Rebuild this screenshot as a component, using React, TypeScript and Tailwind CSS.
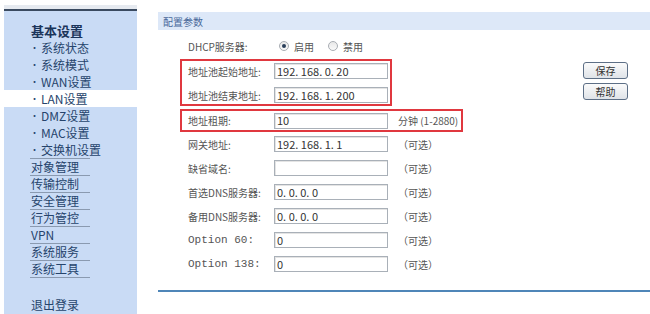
const basicItems = ["系统状态", "系统模式", "WAN设置", "LAN设置", "DMZ设置", "MAC设置", "交换机设置"];
const groupItems = ["对象管理", "传输控制", "安全管理", "行为管控", "VPN", "系统服务", "系统工具"];

const cjk = { fontFamily: '"Noto Sans CJK SC", "DejaVu Sans", sans-serif' };

function Sidebar() {
  return (
    <div className="ml-[4px] mt-[5px] w-[133px] flex flex-col shrink-0">
      <div className="h-[6px] bg-[#e6eaf0] border-b-2 border-[#3a4a60]" />
      <div className="flex-1 bg-[#c9dbf5] pt-[11px] text-[#26446c]">
        <div className="h-[17px] flex items-center pl-[27px] text-[13px] font-bold text-[#1b355a]">
          基本设置
        </div>
        {basicItems.map((item) => (
          <div
            key={item}
            className={
              "h-[17px] flex items-center pl-[26px] text-[12px] " +
              (item === "LAN设置" ? "bg-white" : "")
            }
          >
            <span className="text-[9px] mr-[2px]">•</span>
            {item}
          </div>
        ))}
        <div className="ml-[26px] w-[60px] border-t border-[#8a9ab0]">
          {groupItems.map((item) => (
            <div
              key={item}
              className="h-[17px] flex items-center pl-[1px] text-[12px] border-b border-[#8a9ab0]"
            >
              {item}
            </div>
          ))}
        </div>
        <div className="h-[17px] mt-[18px] flex items-center pl-[27px] text-[12px]">
          退出登录
        </div>
      </div>
    </div>
  );
}

function TextInput({ value }: { value: string }) {
  return (
    <div className="w-[114px] h-[16px] shrink-0 border border-[#a9b0b8] bg-white shadow-[inset_1px_1px_0_#e4e4e4] flex items-center pl-[2px] text-[11px] text-[#333]">
      {value}
    </div>
  );
}

function Label({ text, mono }: { text: string; mono?: boolean }) {
  return (
    <div
      className={"w-[86px] shrink-0 text-[#555] " + (mono ? "text-[11px]" : "text-[10px]")}
      style={mono ? { fontFamily: '"Liberation Mono", monospace' } : undefined}
    >
      {text}
    </div>
  );
}

function Row({
  label,
  value,
  note,
  mono,
}: {
  label: string;
  value: string;
  note?: string;
  mono?: boolean;
}) {
  return (
    <div className="h-[16px] flex items-center">
      <Label text={label} mono={mono} />
      <TextInput value={value} />
      {note && <div className="ml-[10px] text-[10px] text-[#555] whitespace-nowrap">{note}</div>}
    </div>
  );
}

function Radio({ checked }: { checked: boolean }) {
  return (
    <div className="w-[10px] h-[10px] rounded-full border border-[#a8adb3] bg-gradient-to-b from-[#e8e8e8] to-[#fafafa] flex items-center justify-center">
      {checked && <div className="w-[4px] h-[4px] rounded-full bg-[#2a3f5a]" />}
    </div>
  );
}

function Button({ label }: { label: string }) {
  return (
    <div className="w-[45px] h-[17px] rounded-[3px] border border-[#5d6f86] bg-gradient-to-b from-[#fbfbfb] to-[#dfe3e8] flex items-center justify-center text-[10px] text-[#333]">
      {label}
    </div>
  );
}

export default function App() {
  return (
    <div className="w-[650px] h-[314px] bg-white flex overflow-hidden" style={cjk}>
      <Sidebar />
      <div className="flex-1 ml-[20px] flex flex-col">
        <div className="mt-[12px] ml-[1px] h-[18px] bg-[#dde8f8] flex items-center pl-[5px] text-[10px] text-[#49699a]">
          配置参数
        </div>
        <div className="flex">
          <div className="ml-[23px] flex flex-col items-start">
            <div className="mt-[7px] h-[18px] flex items-center pl-[8px]">
              <div className="w-[91px] text-[10px] text-[#555]">DHCP服务器:</div>
              <Radio checked />
              <span className="ml-[5px] text-[10px] text-[#555]">启用</span>
              <div className="ml-[14px]">
                <Radio checked={false} />
              </div>
              <span className="ml-[5px] text-[10px] text-[#555]">禁用</span>
            </div>
            <div className="mt-[4px] w-[212px] border-2 border-[#e0383f] pl-[6px] pt-[1px] flex flex-col gap-[6px]">
              <div className="h-[18px] flex items-center">
                <Label text="地址池起始地址:" />
                <TextInput value="192. 168. 0. 20" />
              </div>
              <div className="h-[18px] flex items-center">
                <Label text="地址池结束地址:" />
                <TextInput value="192. 168. 1. 200" />
              </div>
            </div>
            <div className="mt-[3px] h-[23px] border-2 border-[#e0383f] pl-[6px] pr-[3px] flex items-center">
              <Label text="地址租期:" />
              <TextInput value="10" />
              <div className="ml-[10px] text-[10px] text-[#555] whitespace-nowrap">分钟 (1-2880)</div>
            </div>
            <div className="mt-[4px] pl-[8px] flex flex-col gap-[8px]">
              <Row label="网关地址:" value="192. 168. 1. 1" note="（可选）" />
              <Row label="缺省域名:" value="" note="（可选）" />
              <Row label="首选DNS服务器:" value="0. 0. 0. 0" note="（可选）" />
              <Row label="备用DNS服务器:" value="0. 0. 0. 0" note="（可选）" />
              <Row label="Option 60:" value="0" note="（可选）" mono />
              <Row label="Option 138:" value="0" note="（可选）" mono />
            </div>
          </div>
          <div className="ml-auto mr-[22px] mt-[32px] flex flex-col gap-[4px]">
            <Button label="保存" />
            <Button label="帮助" />
          </div>
        </div>
        <div className="mt-[18px] ml-[1px] h-[2px] bg-[#4f86b8]" />
      </div>
    </div>
  );
}
